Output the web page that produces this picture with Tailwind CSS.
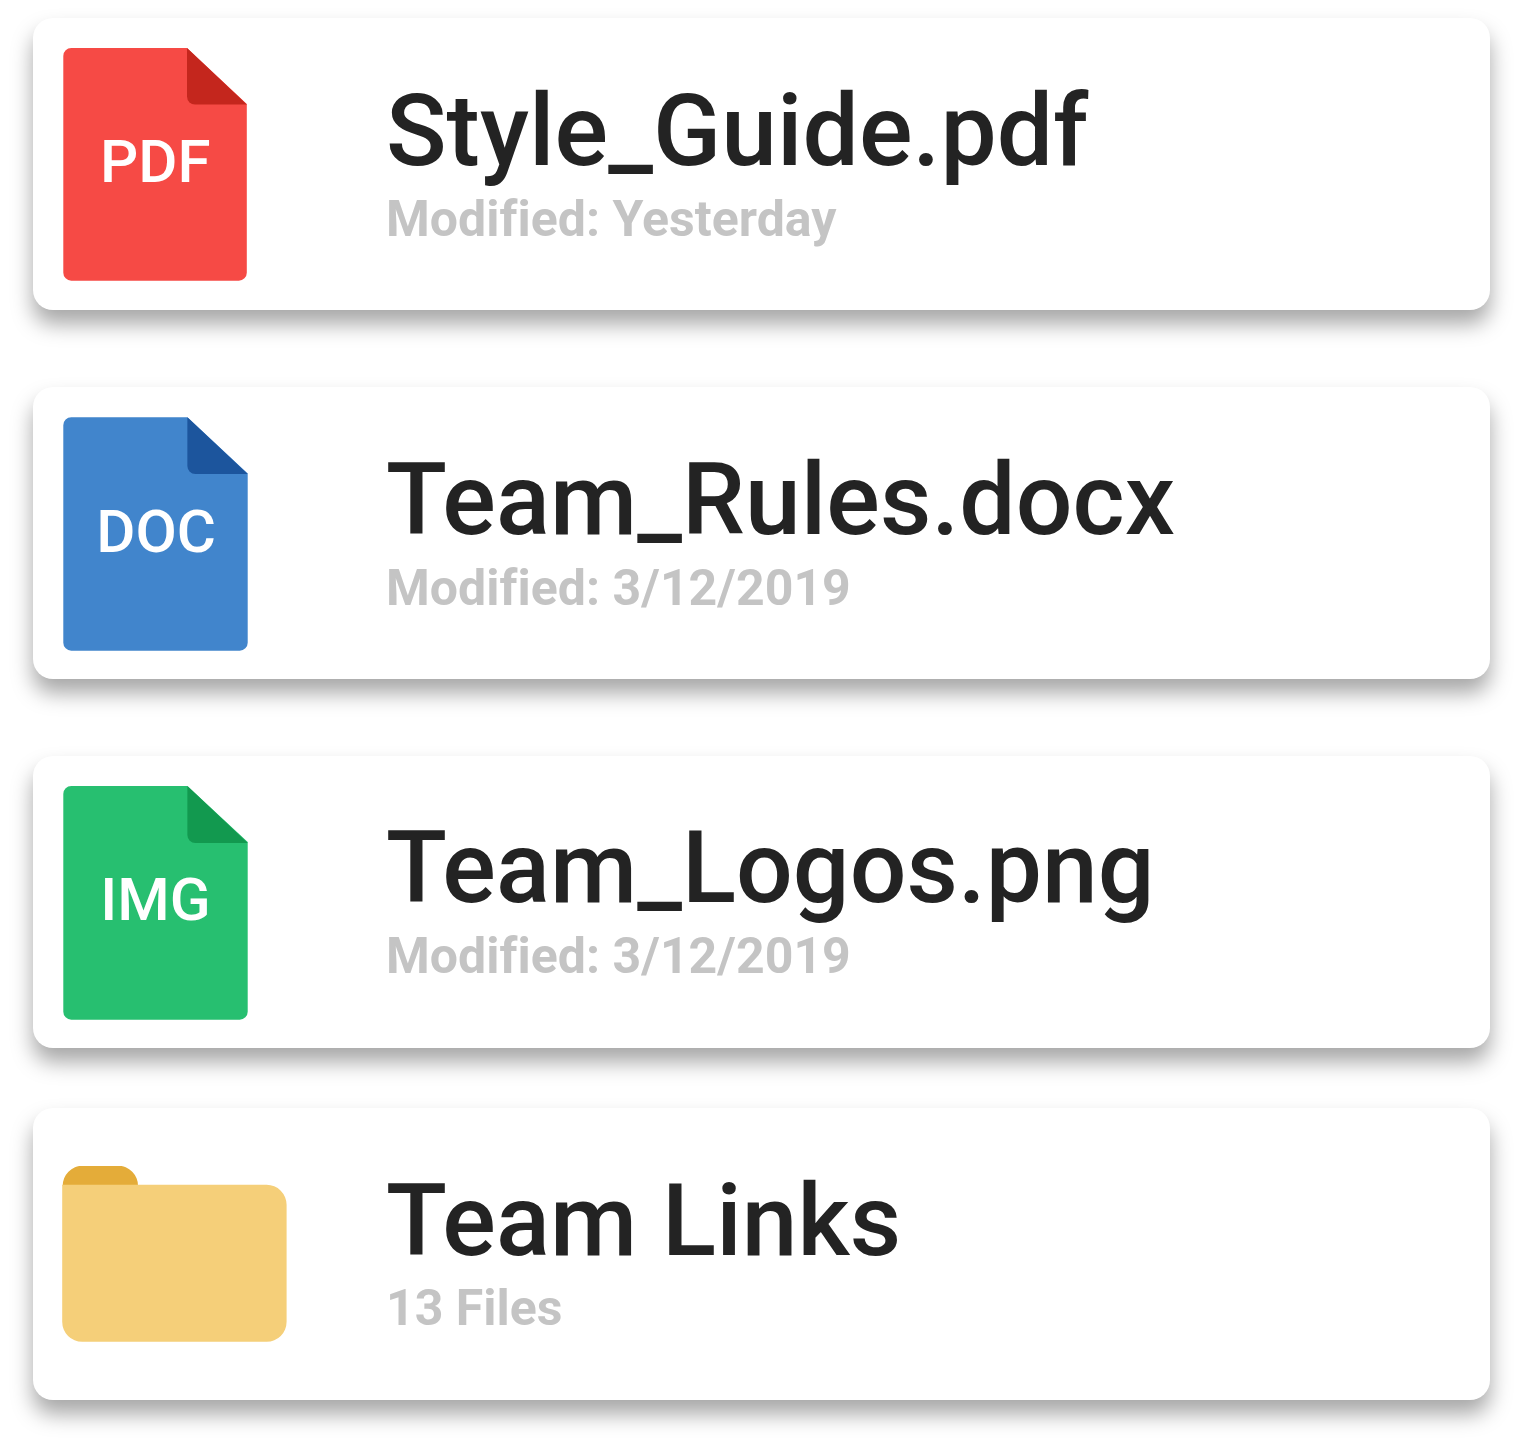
<!DOCTYPE html>
<html lang="en"><head><meta charset="utf-8"><title>Files</title>
<script src="https://cdn.jsdelivr.net/npm/@tailwindcss/browser@4"></script></head>
<body class="bg-white font-['Roboto',sans-serif] min-h-screen [font-variant-ligatures:none]">
<main class="flex flex-col min-h-screen pl-[33px] pr-[32.5px] pt-[18px]">
<article class="flex h-[292px] mb-[77px] rounded-[20px] bg-white shadow-[0_14px_21px_rgba(0,0,0,0.35)] pl-[30px] pt-[30px]">
<svg class="w-[185px] h-[234px] shrink-0" viewBox="0 0 185 234"><path fill="#f64a45" d="M8.300 0H124L183.800 56V224.700a8 8 0 0 1-8 8H8.300a8 8 0 0 1-8-8V8a8 8 0 0 1 8-8Z"/><path fill="#c4261d" d="M124 0L183.800 56.500H132a8 8 0 0 1-8-8Z"/><text x="92.300" y="134" text-anchor="middle" fill="#fff" font-size="60" font-weight="500">PDF</text></svg>
<div class="ml-[138px] pt-[24px]"><h2 class="text-[100px] leading-[118px] font-medium text-[#232323] whitespace-nowrap tracking-[0.07px]">Style_Guide.pdf</h2><p class="text-[50px] leading-[59px] font-bold text-[#c4c4c4] tracking-[0.04px]">Modified: Yesterday</p></div>
</article>
<article class="flex h-[292px] mb-[77px] rounded-[20px] bg-white shadow-[0_14px_21px_rgba(0,0,0,0.35)] pl-[30px] pt-[30px]">
<svg class="w-[185px] h-[234px] shrink-0" viewBox="0 0 185 234"><path fill="#4185cc" d="M8.300 .2H124.400L184.700 56.500V225.700a8 8 0 0 1-8 8H8.300a8 8 0 0 1-8-8V8.200a8 8 0 0 1 8-8Z"/><path fill="#1c559d" d="M124.400 .2L184.700 57H132.400a8 8 0 0 1-8-8Z"/><text x="93.200" y="135" text-anchor="middle" fill="#fff" font-size="60" font-weight="500">DOC</text></svg>
<div class="ml-[138px] pt-[24px]"><h2 class="text-[100px] leading-[118px] font-medium text-[#232323] whitespace-nowrap tracking-[0.07px]">Team_Rules.docx</h2><p class="text-[50px] leading-[59px] font-bold text-[#c4c4c4] tracking-[0.04px]">Modified: 3/12/2019</p></div>
</article>
<article class="flex h-[292px] mb-[60px] rounded-[20px] bg-white shadow-[0_14px_21px_rgba(0,0,0,0.35)] pl-[30px] pt-[30px]">
<svg class="w-[185px] h-[234px] shrink-0" viewBox="0 0 185 234"><path fill="#27bf70" d="M8.300 0H124.400L184.700 56V225.700a8 8 0 0 1-8 8H8.300a8 8 0 0 1-8-8V8a8 8 0 0 1 8-8Z"/><path fill="#12994f" d="M124.400 0L184.700 57H132.400a8 8 0 0 1-8-8Z"/><text x="92.500" y="134" text-anchor="middle" fill="#fff" font-size="60" font-weight="500">IMG</text></svg>
<div class="ml-[138px] pt-[23px]"><h2 class="text-[100px] leading-[118px] font-medium text-[#232323] whitespace-nowrap tracking-[0.07px]">Team_Logos.png</h2><p class="text-[50px] leading-[59px] font-bold text-[#c4c4c4] tracking-[0.04px]">Modified: 3/12/2019</p></div>
</article>
<article class="flex h-[292px] rounded-[20px] bg-white shadow-[0_14px_21px_rgba(0,0,0,0.35)] pl-[29px] pt-[30px]">
<svg class="w-[225px] h-[177px] mt-[28px] shrink-0" viewBox="0 0 225 177"><path fill="#e4ac39" d="M.7 20A20 20 0 0 1 20.700 -.3H56A20 20 0 0 1 76 20Z"/><path fill="#f5cf79" d="M.2 18.800H204.600a20 20 0 0 1 20 20V155.800a20 20 0 0 1-20 20H20.200a20 20 0 0 1-20-20Z"/></svg>
<div class="ml-[99px] pt-[24px]"><h2 class="text-[100px] leading-[118px] font-medium text-[#232323] whitespace-nowrap tracking-[0.07px]">Team Links</h2><p class="-mt-px text-[50px] leading-[59px] font-bold text-[#c4c4c4]">13 Files</p></div>
</article>
</main></body></html>
